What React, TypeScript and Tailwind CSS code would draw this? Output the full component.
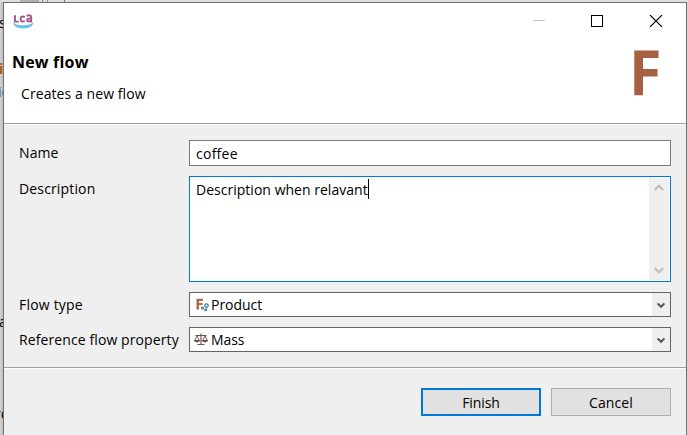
import React from "react";

const font = "font-['Open_Sans','Noto_Sans',sans-serif]";

function Chevron({ up, color, size, stroke }: { up?: boolean; color: string; size: number; stroke: number }) {
  return (
    <svg width={size} height={size} viewBox="0 0 10 10" className="block" fill="none" stroke={color} strokeWidth={stroke}>
      <path d={up ? "M0.7 7L5 2.7L9.3 7" : "M0.7 3L5 7.3L9.3 3"} />
    </svg>
  );
}

function LcaLogo() {
  return (
    <svg width="21" height="17" viewBox="0 0 21 17" className="block">
      <g fill="none" stroke="#a4578c" strokeWidth="1.9">
        <path d="M2 2.2V8.6H5.8" />
        <path d="M11.800 4.100Q7.600 2.300 7.600 6Q7.600 9.600 11.800 8.100" />
        <path d="M13.600 2.800Q18.200 1.200 18.200 4.300V9.600" />
        <path d="M18.200 5.600Q13.800 5.200 14 7.300Q14.600 9.300 18.200 7.800" />
      </g>
      <path d="M0 9.300Q2.500 12.200 10 12.200Q17.500 12.200 20.500 9.300Q19.800 15.500 10.200 15.600Q0.600 15.500 0 9.300Z" fill="#6ac2ec" />
    </svg>
  );
}

function FlowIcon() {
  return (
    <svg width="14" height="14" viewBox="0 0 14 14" className="block">
      <path d="M0.500 0.800H7V3H3V4.900H6.500V7H3V11.500H0.500Z" fill="#b0694b" />
      <g fill="none" stroke="#3c7c9c" strokeWidth="1.200">
        <circle cx="10.500" cy="7.600" r="1.700" />
        <circle cx="6.500" cy="10" r="1" />
        <circle cx="9.800" cy="11.800" r="0.900" />
      </g>
    </svg>
  );
}

function ScaleIcon() {
  return (
    <svg width="14" height="13" viewBox="0 0 14 13" className="block" fill="none" stroke="#715248" strokeWidth="1.100">
      <path d="M7 0.500V11.500M3.500 11.500H10.500M1.500 2.500H12.500" />
      <path d="M3 2.500L0.800 7.500M3 2.500L5.200 7.500M11 2.500L8.800 7.500M11 2.500L13.200 7.500" strokeWidth="0.900" />
      <path d="M0.500 7.600H5.500Q3 10 0.500 7.600ZM8.500 7.600H13.500Q11 10 8.500 7.600Z" />
    </svg>
  );
}

function Combo({ icon, children }: { icon: React.ReactNode; children: React.ReactNode }) {
  return (
    <div className="flex h-[25px] w-[482px] border border-[#646464] bg-white">
      <div className="flex flex-1 items-center pl-1">
        <span className="w-[17px]">{icon}</span>
        {children}
      </div>
      <div className="flex w-[18px] items-center justify-center bg-[#efefef]">
        <Chevron color="#555" size={8} stroke={2.6} />
      </div>
    </div>
  );
}

export default function App() {
  return (
    <div className={`h-[435px] w-[687px] overflow-hidden bg-[#dedede] text-[14px] leading-5 text-black ${font}`}>
      <div className="flex h-[2px]">
        <div className="ml-5 w-[19px] bg-[#b0b0b0]" />
        <div className="ml-[3px] w-px bg-[#888]" />
        <div className="ml-1 w-px bg-[#999]" />
        <div className="ml-4 w-px bg-[#777]" />
      </div>
      <div className="flex h-[433px]">
        <div className="h-full w-[3px] overflow-hidden bg-linear-to-r from-[#d4d4d4] to-[#bcbcbc] whitespace-nowrap">
          <div className="-ml-px pt-[11px]">s</div>
          <div className="-ml-px pt-[26px] font-bold text-[#a85a08]">i</div>
          <div className="-ml-[2px] pt-[3px] text-[#205c9c]">ic</div>
          <div className="-ml-px pt-[210px]">a</div>
          <div className="-ml-[5px] pt-[72px]">ro</div>
        </div>
        <main className="flex h-full w-[684px] flex-col border border-b-0 border-[#707070] bg-[#efefef]">
          <header className="flex h-[120px] justify-between bg-white">
            <div>
              <div className="pt-[10px] pl-[9px]"><LcaLogo /></div>
              <h1 className="pt-5 pl-2 text-[16px] leading-6 font-bold"><span className="tracking-[0.2px]">New flow</span></h1>
              <p className="pt-[10px] pl-[17px]"><span className="tracking-[0.08px]">Creates a new flow</span></p>
            </div>
            <div className="w-[156px]">
              <div className="flex pt-[12px]">
                <svg width="156" height="12" viewBox="0 0 156 12" shapeRendering="crispEdges" fill="none" stroke="#000">
                  <path d="M3 5.500H15" stroke="#c5c5c5" />
                  <path d="M61.500 0.500H72.500V11.500H61.500Z" />
                  <path d="M120 0L132 12M132 0L120 12" shapeRendering="auto" strokeWidth="1.100" />
                </svg>
              </div>
              <svg width="25" height="46" viewBox="0 0 25 46" className="mt-[23px] ml-[104px] block">
                <path d="M0.300 0.500H24.500V8H9V19H23.500V26.500H9V45.300H0.300Z" fill="#a66143" />
              </svg>
            </div>
          </header>
          <div className="h-[2px] border-t border-[#a0a0a0] bg-white" />
          <section className="flex h-[242px] flex-col pt-[15px] pl-[15px]">
            <div className="flex h-9">
              <label className="w-[170px] pt-[3px]"><span className="tracking-[0.1px]">Name</span></label>
              <div className="h-[26px] w-[482px] border border-[#7a7a7a] bg-white pt-[3px] pl-[6px]"><span className="tracking-[0.25px]">coffee</span></div>
            </div>
            <div className="flex h-[116px]">
              <label className="w-[170px] pt-[3px]"><span className="tracking-[0.15px]">Description</span></label>
              <div className="flex h-[106px] w-[482px] border border-[#0078d7] bg-white p-px">
                <div className="flex flex-1 pt-px pl-[5px]">
                  <span className="pt-px tracking-[0.02px]">Description when relavant</span>
                  <span className="h-5 w-px bg-black" />
                </div>
                <div className="flex h-[102px] w-5 flex-col items-center justify-between bg-[#efefef] py-[5px]">
                  <Chevron up color="#bdbdbd" size={10} stroke={2.1} />
                  <Chevron color="#bdbdbd" size={10} stroke={2.1} />
                </div>
              </div>
            </div>
            <div className="flex h-[35px]">
              <label className="w-[170px] pt-[3px]"><span className="tracking-[0.2px]">Flow type</span></label>
              <Combo icon={<span className="block pl-[2px]"><FlowIcon /></span>}><span className="tracking-[-0.03px]">Product</span></Combo>
            </div>
            <div className="flex">
              <label className="w-[170px] pt-[3px]"><span className="tracking-[0.1px]">Reference flow property</span></label>
              <Combo icon={<ScaleIcon />}><span className="tracking-[-0.1px]">Mass</span></Combo>
            </div>
          </section>
          <div className="h-[2px] border-t border-[#a0a0a0] bg-white" />
          <footer className="flex justify-end gap-[10px] pt-[19px] pr-[15px]">
            <button className="h-7 w-[120px] border-2 border-[#0078d7] bg-[#e1e1e1] pt-px"><span className="tracking-[-0.1px]">Finish</span></button>
            <button className="h-7 w-[120px] border border-[#adadad] bg-[#e1e1e1] pt-px"><span className="tracking-[0.1px]">Cancel</span></button>
          </footer>
        </main>
      </div>
    </div>
  );
}
